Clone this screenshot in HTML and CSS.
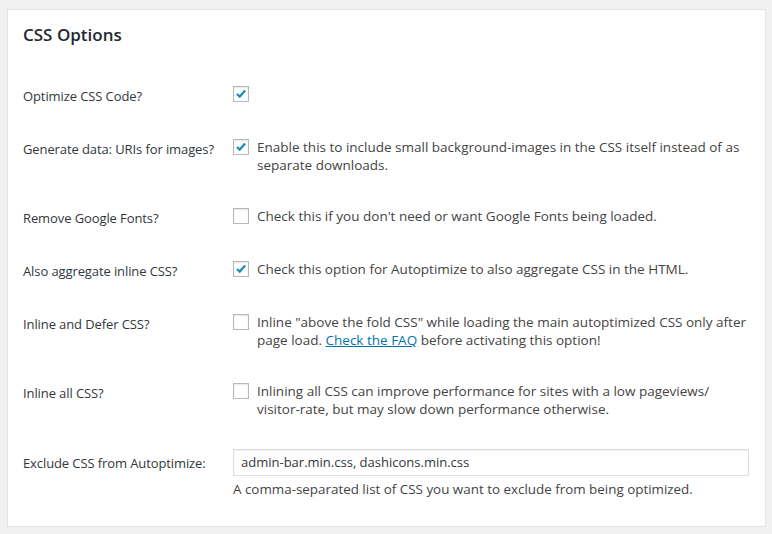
FILE: index.html
```html
<!DOCTYPE html>
<html lang="en">
<head>
<meta charset="utf-8">
<title>CSS Options</title>
<link rel="stylesheet" href="styles.css">
</head>
<body>
<div class="panel">
  <h2 class="title">CSS Options</h2>
  <div class="row">
    <div class="label">Optimize CSS Code?</div>
    <div class="field">
      <span class="cb checked"><svg viewBox="0 0 16 16"><path d="M3.4 8 L6.5 11 L12.7 4"/></svg></span>
    </div>
  </div>
  <div class="row">
    <div class="label">Generate data: URIs for images?</div>
    <div class="field">
      <span class="cb checked"><svg viewBox="0 0 16 16"><path d="M3.4 8 L6.5 11 L12.7 4"/></svg></span>
      <span class="desc">Enable this to include small background-images in the CSS itself instead of as separate downloads.</span>
    </div>
  </div>
  <div class="row">
    <div class="label">Remove Google Fonts?</div>
    <div class="field">
      <span class="cb"></span>
      <span class="desc">Check this if you don't need or want Google Fonts being loaded.</span>
    </div>
  </div>
  <div class="row">
    <div class="label">Also aggregate inline CSS?</div>
    <div class="field">
      <span class="cb checked"><svg viewBox="0 0 16 16"><path d="M3.4 8 L6.5 11 L12.7 4"/></svg></span>
      <span class="desc">Check this option for Autoptimize to also aggregate CSS in the HTML.</span>
    </div>
  </div>
  <div class="row">
    <div class="label">Inline and Defer CSS?</div>
    <div class="field">
      <span class="cb"></span>
      <span class="desc">Inline "above the fold CSS" while loading the main autoptimized CSS only after page load. <a href="#">Check the FAQ</a> before activating this option!</span>
    </div>
  </div>
  <div class="row">
    <div class="label">Inline all CSS?</div>
    <div class="field">
      <span class="cb"></span>
      <span class="desc">Inlining all CSS can improve performance for sites with a low pageviews/ <span class="nowrap">visitor-rate,</span> but may slow down performance otherwise.</span>
    </div>
  </div>
  <div class="row row-input">
    <div class="label">Exclude CSS from Autoptimize:</div>
    <div class="field field-col">
      <div class="input">admin-bar.min.css, dashicons.min.css</div>
      <div class="hint">A comma-separated list of CSS you want to exclude from being optimized.</div>
    </div>
  </div>
</div>
</body>
</html>
```

FILE: styles.css
```css
html, body {
  margin: 0;
  padding: 0;
}
body {
  background: #f1f1f1;
  padding: 9px 6px 0 7px;
  font-family: "Open Sans", "Noto Sans", sans-serif;
  font-size: 13px;
  color: #444;
}
.panel {
  box-sizing: border-box;
  height: 518px;
  background: #fff;
  border: 1px solid #e5e5e5;
  box-shadow: 0 1px 1px rgba(0,0,0,.04);
  padding: 0 15px;
}
.title {
  margin: 14px 0 24px;
  font-size: 17px;
  line-height: 22px;
  font-weight: 600;
  color: #23282d;
}
.row {
  display: flex;
  padding: 15px 0 18px;
}
.label {
  flex: 0 0 210px;
  padding-top: 2px;
  line-height: 18px;
  color: #32373c;
  letter-spacing: -0.1px;
}
.field {
  flex: 1;
  display: flex;
  align-items: flex-start;
  line-height: 18px;
  padding-right: 1px;
}
.cb {
  flex: 0 0 auto;
  box-sizing: border-box;
  width: 16px;
  height: 16px;
  margin: 1px 8px 0 0;
  border: 1px solid #b4b9be;
  background: #fff;
  box-shadow: inset 0 1px 2px rgba(0,0,0,.1);
  display: flex;
  align-items: center;
  justify-content: center;
}
.cb svg {
  width: 14px;
  height: 14px;
  fill: none;
  stroke: #1e8cbe;
  stroke-width: 2.6;
}
.desc {
  color: #444;
  font-size: 13.5px;
}
.nowrap {
  white-space: nowrap;
}
.desc a {
  color: #0073aa;
  text-decoration: underline;
}
.row-input {
  padding-top: 13px;
}
.row-input .label {
  padding-top: 5px;
}
.field-col {
  flex-direction: column;
  align-items: stretch;
}
.input {
  box-sizing: border-box;
  height: 27px;
  border: 1px solid #ddd;
  box-shadow: inset 0 1px 2px rgba(0,0,0,.07);
  padding: 0 7px;
  line-height: 25px;
  font-size: 13px;
  color: #32373c;
}
.hint {
  margin-top: 4px;
  line-height: 18px;
  font-size: 13.4px;
  color: #444;
}
```
